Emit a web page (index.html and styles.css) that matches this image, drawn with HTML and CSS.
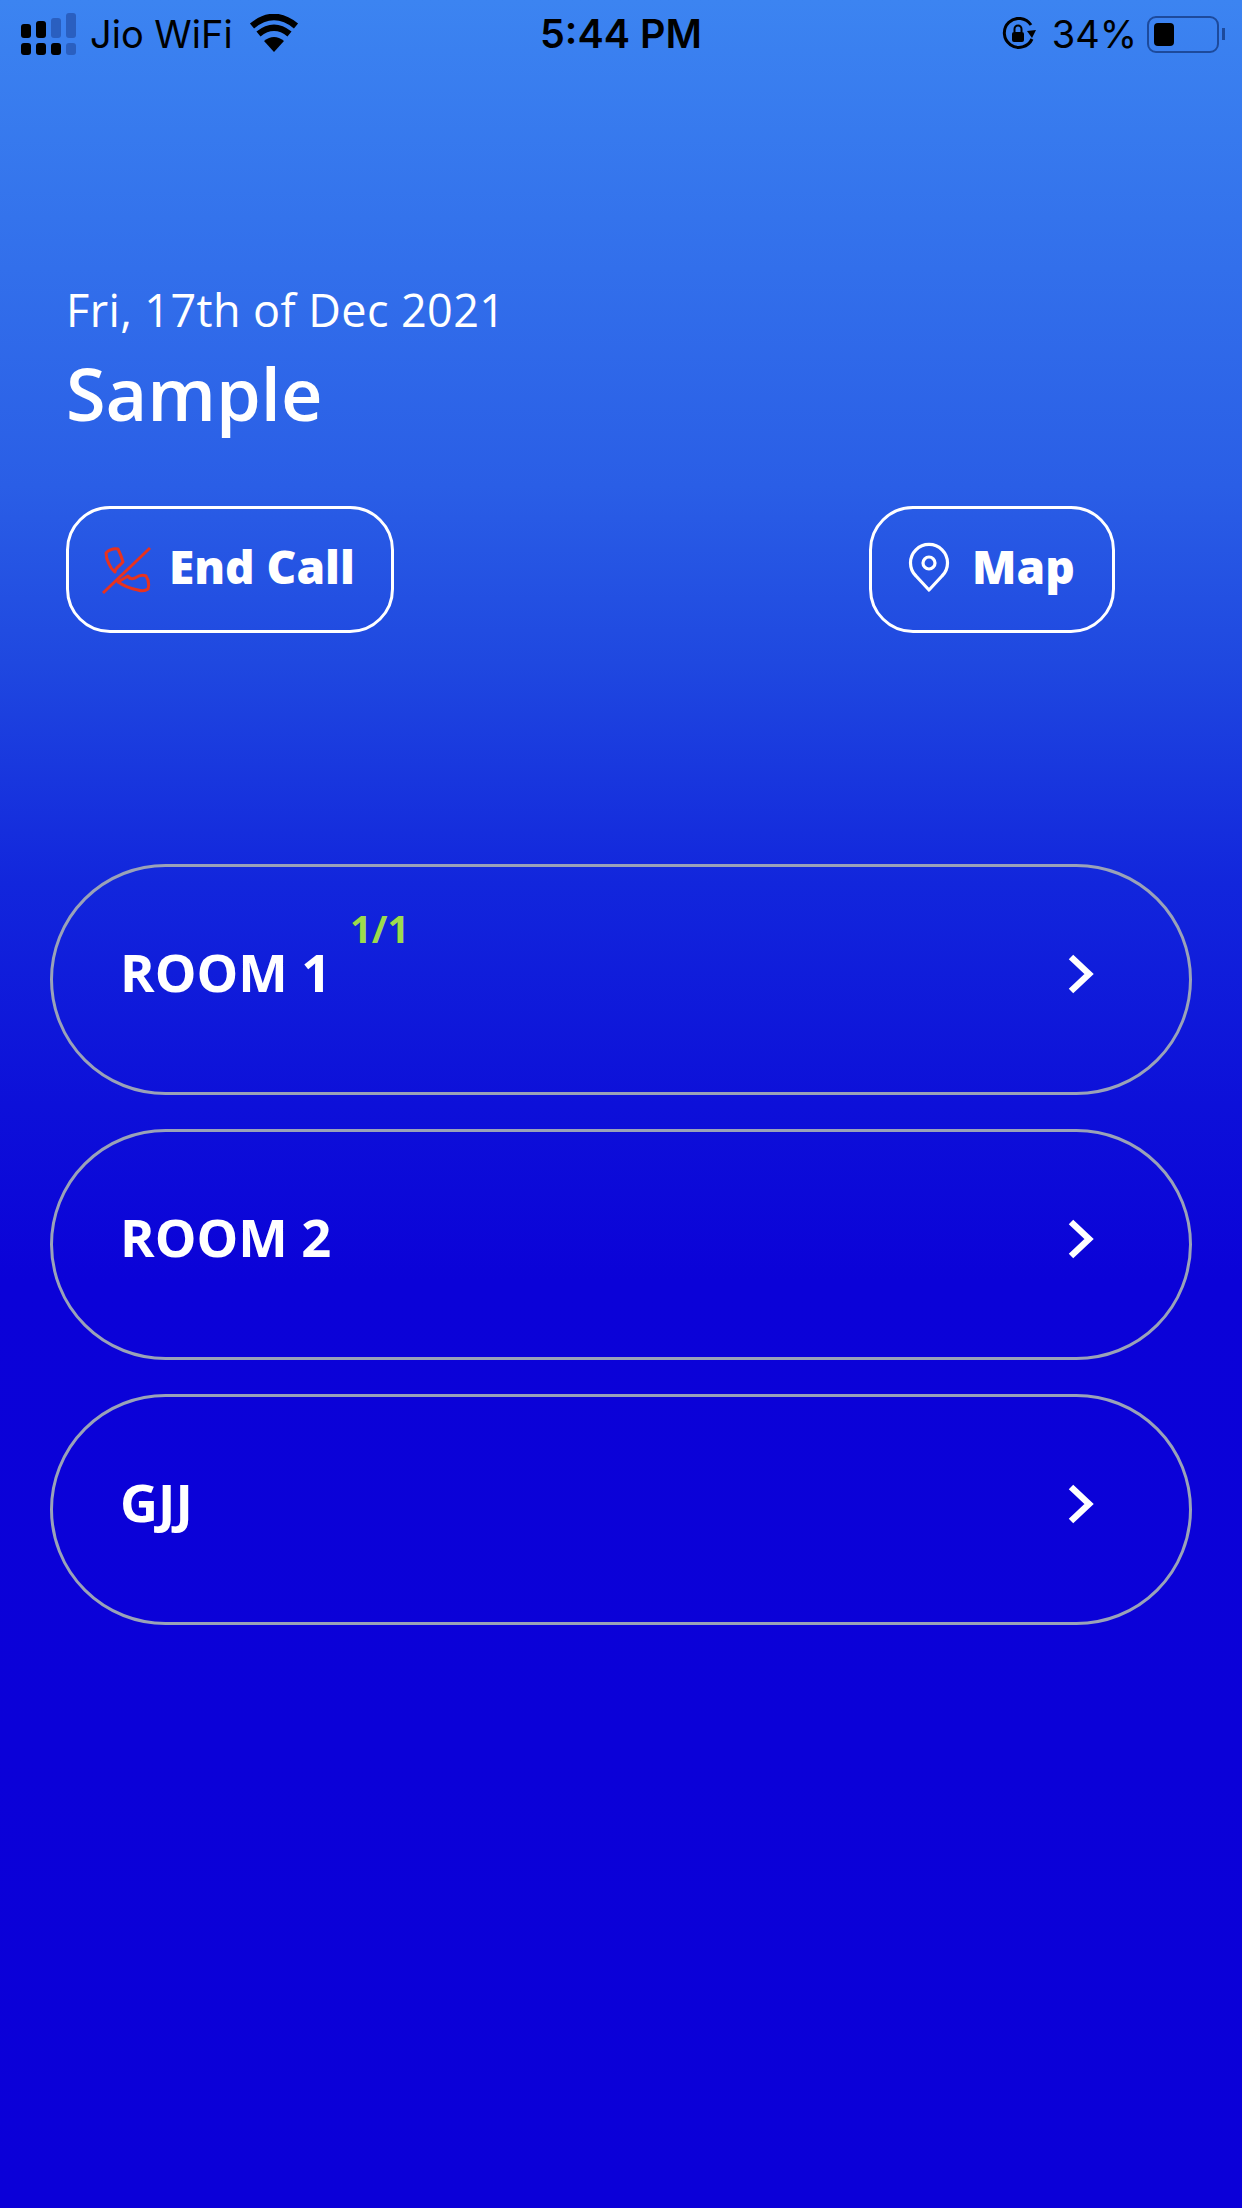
FILE: index.html
```html
<!DOCTYPE html>
<html lang="en">
<head>
<meta charset="UTF-8" />
<meta name="viewport" content="width=device-width, initial-scale=1" />
<title>Rooms</title>
<link rel="stylesheet" href="styles.css">
</head>
<body>

<!-- Status bar -->
<div class="status-bar">
  <div class="status-left">
    <svg class="signal" width="58" height="42" viewBox="0 0 58 42">
      <g fill="#000">
        <rect x="1" y="11" width="10" height="14" rx="3"/>
        <rect x="16" y="8" width="10" height="17" rx="3"/>
        <rect x="1" y="30" width="10" height="12" rx="3"/>
        <rect x="16" y="30" width="10" height="12" rx="3"/>
        <rect x="31" y="30" width="10" height="12" rx="3"/>
      </g>
      <g fill="#2a5fc0">
        <rect x="31" y="5" width="10" height="20" rx="3"/>
        <rect x="46" y="0" width="10" height="25" rx="3"/>
        <rect x="46" y="30" width="10" height="12" rx="3"/>
      </g>
    </svg>
    <span class="carrier">Jio WiFi</span>
    <svg class="wifi" width="50" height="38" viewBox="0 0 50 38">
      <path d="M25 38 L15 27 Q25 19 35 27 Z" fill="#000"/>
      <path d="M9.500 20 Q25 7.500 40.500 20" fill="none" stroke="#000" stroke-width="6.500"/>
      <path d="M3 12 Q25 -6 47 12" fill="none" stroke="#000" stroke-width="6.500"/>
    </svg>
  </div>
  <div class="status-time">5:44 PM</div>
  <div class="status-right">
    <svg class="rotation" width="36" height="34" viewBox="0 0 36 34">
      <path d="M30 8 A14.500 14.500 0 1 0 31 22" fill="none" stroke="#000" stroke-width="3"/>
      <path d="M26 14 L35 13 L31 21 Z" fill="#000"/>
      <rect x="11" y="15" width="12" height="10" rx="2" fill="#000"/>
      <path d="M13.500 15 V12 A3.500 3.500 0 0 1 20.500 12 V15" fill="none" stroke="#000" stroke-width="2"/>
    </svg>
    <span class="battery-pct">34%</span>
    <div class="battery">
      <div class="battery-level"></div>
    </div>
    <div class="battery-tip"></div>
  </div>
</div>

<!-- Header -->
<div class="header">
  <div class="date">Fri, 17th of Dec 2021</div>
  <h1 class="title">Sample</h1>
  <div class="actions">
    <button class="action-btn end-call">
      <svg width="50" height="50" viewBox="0 0 50 50">
        <path d="M5 8 Q10 3 17 4 Q20 10 22 17 L19 20 Q14 24 14 27 Q10 24 8 19 Q5 13 5 8 Z" fill="none" stroke="#e8321e" stroke-width="3" stroke-linejoin="round"/>
        <path d="M17 37 L27 31 Q29 35 34 33 Q40 29 45 31 Q49 37 47 44 Q43 47 37 45 Q26 43 17 37 Z" fill="none" stroke="#e8321e" stroke-width="3" stroke-linejoin="round"/>
        <path d="M2 48 L49 3" stroke="#e8321e" stroke-width="3"/>
      </svg>
      <span class="btn-label">End Call</span>
    </button>
    <button class="action-btn map">
      <svg class="pin" width="42" height="50" viewBox="0 0 42 50">
        <path d="M21 48 L8 34 A18.500 18.500 0 1 1 34 34 Z" fill="none" stroke="#fff" stroke-width="3.200" stroke-linejoin="round"/>
        <circle cx="21" cy="21" r="6" fill="none" stroke="#fff" stroke-width="3.200"/>
      </svg>
      <span class="btn-label">Map</span>
    </button>
  </div>
</div>

<!-- Rooms -->
<div class="room-list">
  <div class="room">
    <span class="room-name">ROOM 1<span class="room-count">1/1</span></span>
    <svg class="chevron" width="28" height="42" viewBox="0 0 28 42"><path d="M3 4 L21 21 L3 38" fill="none" stroke="#fff" stroke-width="6.500"/></svg>
  </div>
  <div class="room">
    <span class="room-name">ROOM 2</span>
    <svg class="chevron" width="28" height="42" viewBox="0 0 28 42"><path d="M3 4 L21 21 L3 38" fill="none" stroke="#fff" stroke-width="6.500"/></svg>
  </div>
  <div class="room">
    <span class="room-name">GJJ</span>
    <svg class="chevron" width="28" height="42" viewBox="0 0 28 42"><path d="M3 4 L21 21 L3 38" fill="none" stroke="#fff" stroke-width="6.500"/></svg>
  </div>
</div>

</body>
</html>
```

FILE: styles.css
```css
html, body {
  margin: 0;
  padding: 0;
}

body {
  width: 1242px;
  height: 2208px;
  overflow: hidden;
  font-family: "Open Sans", Arial, sans-serif;
  color: #fff;
  background: linear-gradient(180deg, #3c84f1 0%, #2a5ee6 22%, #1f48e0 30%, #1226dc 40%, #0d10d9 50%, #0b02d8 58%, #0b00d8 100%);
}

/* Status bar */
.status-bar {
  position: relative;
  height: 68px;
  display: flex;
  align-items: center;
  justify-content: space-between;
  padding: 0 17px 0 20px;
  color: #000;
  font-family: Inter, "Liberation Sans", Arial, sans-serif;
  font-size: 38px;
}

.status-left,
.status-right {
  display: flex;
  align-items: center;
}

.carrier {
  margin-left: 12px;
  margin-right: 16px;
}

.wifi {
  margin-bottom: 3px;
}

.status-time {
  position: absolute;
  left: 540px;
  font-weight: 600;
  font-size: 39.500px;
}

.rotation {
  margin-right: 15px;
}

.battery-pct {
  margin-right: 10px;
}

.battery {
  width: 58px;
  height: 23px;
  border: 2px solid #1d4a9c;
  border-radius: 9px;
  padding: 5px;
}

.battery-level {
  width: 20px;
  height: 23px;
  background: #000;
  border-radius: 4px;
}

.battery-tip {
  width: 3px;
  height: 12px;
  background: #1d4a9c;
  margin-left: 3px;
}

/* Header */
.header {
  padding: 215px 127px 0 66px;
}

.date {
  font-size: 45px;
  line-height: 54px;
  letter-spacing: 0.4px;
}

.title {
  margin: 11px 0 0;
  font-size: 72px;
  line-height: 90px;
  font-weight: 600;
}

.actions {
  display: flex;
  justify-content: space-between;
  margin-top: 68px;
}

.action-btn {
  display: flex;
  align-items: center;
  height: 127px;
  box-sizing: border-box;
  border: 3px solid #fff;
  border-radius: 44px;
  background: transparent;
  color: #fff;
  font-family: inherit;
  font-size: 46px;
  font-weight: 800;
}

.btn-label {
  margin-bottom: 8px;
}

.end-call {
  width: 328px;
  padding: 0 0 0 32px;
  gap: 18px;
}

.map {
  width: 246px;
  padding: 0 0 0 36px;
  gap: 22px;
}

.pin {
  margin-bottom: 6px;
}

/* Rooms */
.room-list {
  display: flex;
  flex-direction: column;
  gap: 34px;
  margin: 231px 50px 0;
}

.room {
  display: flex;
  align-items: flex-start;
  justify-content: space-between;
  height: 231px;
  box-sizing: border-box;
  border: 3px solid #9aa2b8;
  border-radius: 115.500px;
  padding: 71px 93px 0 67px;
}

.room-name {
  position: relative;
  font-size: 52.500px;
  line-height: 68px;
  font-weight: 700;
}

.room-count {
  position: absolute;
  left: 230px;
  top: -35px;
  font-size: 38px;
  line-height: 50px;
  color: #9ddb4c;
}

.chevron {
  margin-top: 15px;
}
```
